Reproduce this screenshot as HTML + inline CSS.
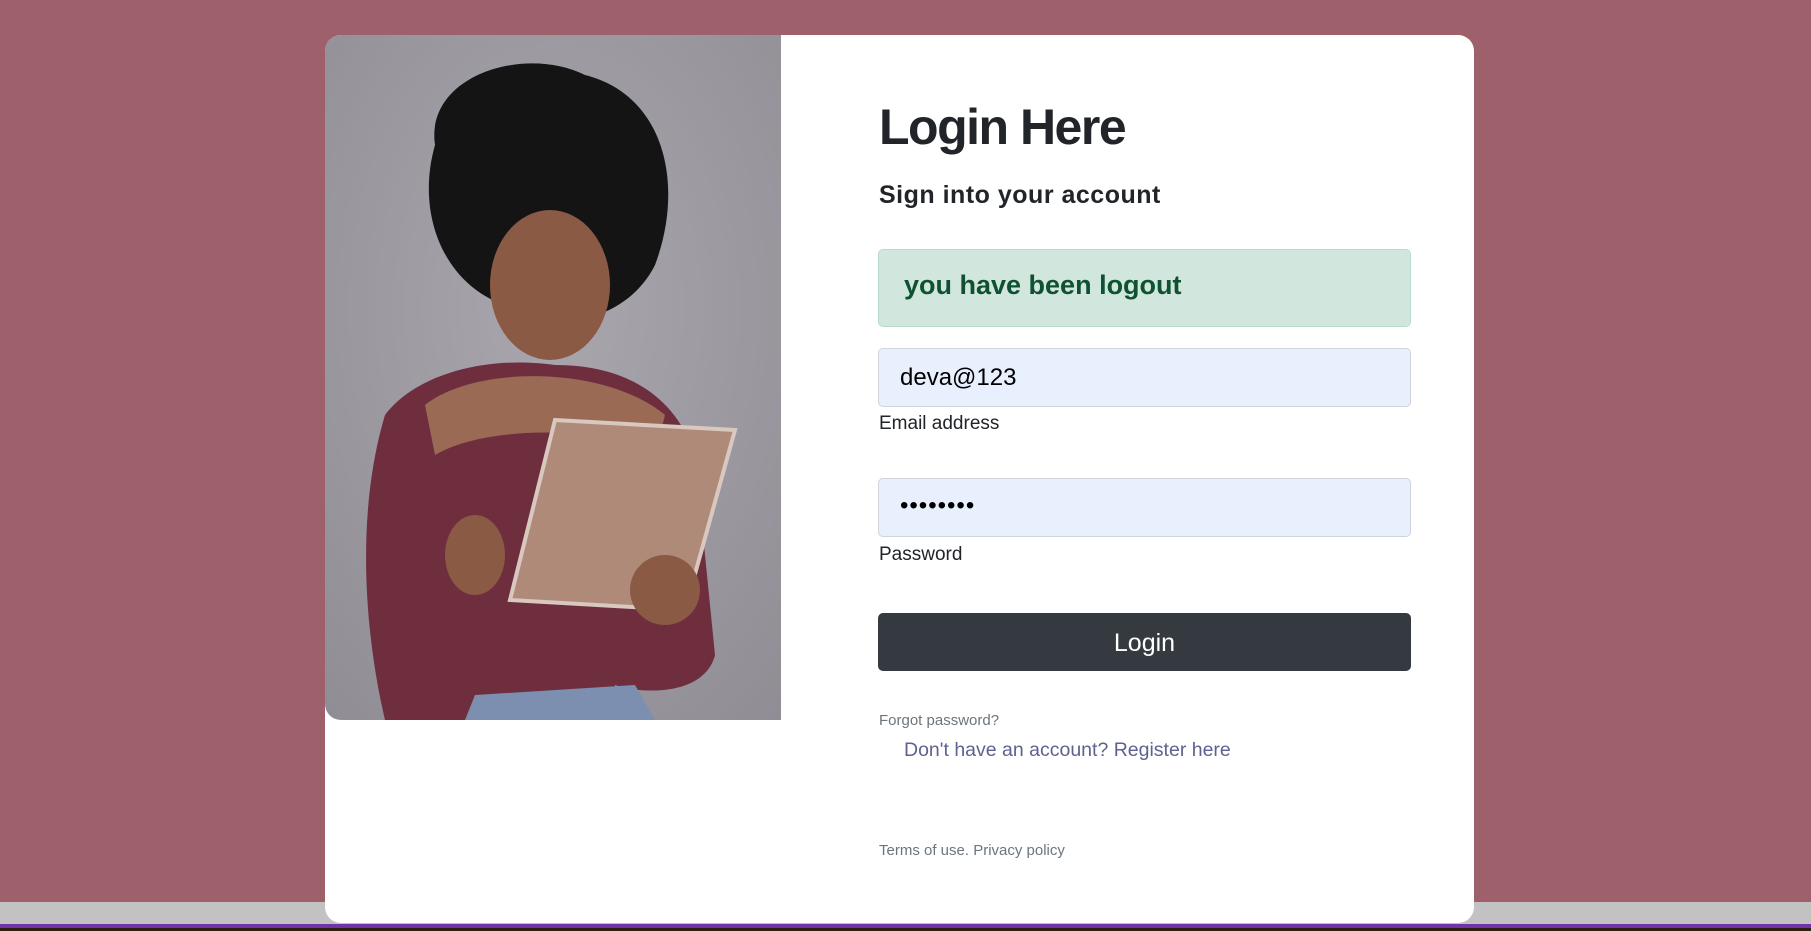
<!DOCTYPE html>
<html><head><style>
*{margin:0;padding:0;box-sizing:border-box}
body{width:1811px;height:931px;background:#9e616b;position:relative;overflow:hidden;font-family:"Liberation Sans",sans-serif}
.strip{position:absolute;left:0;top:902px;width:1811px;height:22px;background:#c2c2c2}
.purp{position:absolute;left:0;top:924px;width:1811px;height:4px;background:#7033a8}
.dark{position:absolute;left:0;top:928px;width:1811px;height:3px;background:#2e1e10}
.card{position:absolute;left:325px;top:35px;width:1149px;height:888px;background:#fff;border-radius:16px;overflow:hidden}
.photo{position:absolute;left:0;top:0;width:456px;height:685px;border-bottom-left-radius:16px;overflow:hidden}
.t{position:absolute;left:879px;white-space:nowrap}
.box{position:absolute;left:878px;width:533px;border-radius:5px}
</style></head><body>
<div class="strip"></div><div class="purp"></div><div class="dark"></div>
<div class="card">
<div class="photo">
<svg width="456" height="685" viewBox="0 0 456 685">
<defs><radialGradient id="bg" cx="0.5" cy="0.4" r="0.8"><stop offset="0" stop-color="#a9a6ae"/><stop offset="1" stop-color="#8f8c94"/></radialGradient></defs>
<rect width="456" height="685" fill="url(#bg)"/>
<path d="M110 110 C100 40 200 10 260 40 C340 60 360 150 330 230 C300 290 220 300 180 270 C120 250 90 180 110 110Z" fill="#141414"/>
<ellipse cx="225" cy="250" rx="60" ry="75" fill="#8a5a45"/>
<path d="M60 380 C90 340 160 320 230 330 C300 330 350 360 370 420 L390 620 C380 660 320 660 290 650 L290 685 L60 685 C40 600 30 480 60 380Z" fill="#6e2e3e"/>
<path d="M100 370 C150 330 280 330 340 380 L330 420 C280 390 160 390 110 420Z" fill="#9a6a55"/>
<path d="M230 385 L410 395 L360 575 L185 565Z" fill="#b08a78" stroke="#d8c8c0" stroke-width="4"/>
<ellipse cx="150" cy="520" rx="30" ry="40" fill="#8a5a45"/>
<ellipse cx="340" cy="555" rx="35" ry="35" fill="#8a5a45"/>
<path d="M150 660 L310 650 L330 685 L140 685Z" fill="#7d8fb0"/>
</svg>
</div>
</div>
<div class="t" style="top:98px;font-size:50px;font-weight:bold;color:#212529;letter-spacing:-1.5px">Login Here</div>
<div class="t" style="top:181px;font-size:25px;font-weight:bold;color:#212529;letter-spacing:0.5px">Sign into your account</div>
<div class="box" style="top:249px;height:78px;background:#d1e7dd;border:1px solid #badbcc"></div>
<div class="t" style="left:904px;top:270px;font-size:27px;font-weight:bold;color:#0f5132">you have been logout</div>
<div class="box" style="top:348px;height:59px;background:#e8f0fe;border:1px solid #ced4da"></div>
<div class="t" style="left:900px;top:364px;font-size:24px;color:#000">deva@123</div>
<div class="t" style="top:413px;font-size:19px;color:#212529">Email address</div>
<div class="box" style="top:478px;height:59px;background:#e8f0fe;border:1px solid #ced4da"></div>
<div class="t" style="left:900px;top:492px;font-size:24px;color:#000;letter-spacing:1px">••••••••</div>
<div class="t" style="top:544px;font-size:19px;color:#212529">Password</div>
<div class="box" style="top:613px;height:58px;background:#343a40;color:#fff;font-size:25px;text-align:center;line-height:60px">Login</div>
<div class="t" style="top:712px;font-size:15px;color:#6c757d">Forgot password?</div>
<div class="t" style="left:904px;top:739px;font-size:19.5px;color:#5f6190">Don't have an account? Register here</div>
<div class="t" style="top:842px;font-size:15px;color:#6c757d">Terms of use. Privacy policy</div>
</body></html>
